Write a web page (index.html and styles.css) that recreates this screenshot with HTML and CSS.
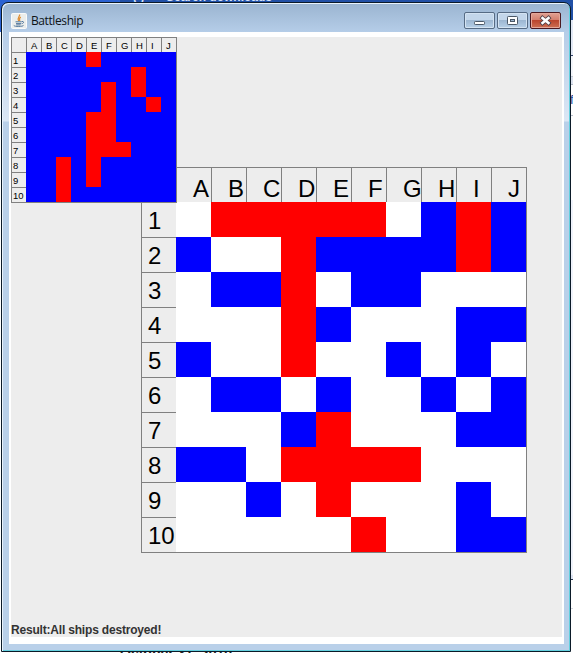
FILE: index.html
```html
<!DOCTYPE html>
<html lang="en">
<head>
<meta charset="utf-8">
<title>Battleship</title>
<link rel="stylesheet" href="styles.css">
</head>
<body>
<div class="desktop">
  <div class="behind-top"><span class="behind-mark">( )</span><span class="behind-label">Search downloads</span></div>
  <div class="behind-right"><span class="behind-letter">f</span></div>
  <div class="behind-bottom">October 31, 2010</div>
  <div class="window">
    <div class="titlebar">
      <svg class="app-icon" width="16" height="16" viewBox="0 0 16 16">
        <rect x=".5" y=".5" width="15" height="15" rx="1" fill="#eceeec" stroke="#fafafa"/>
        <path d="M8.7 1.5C9 3.5 5.8 4.5 7.6 8M9.8 4C7.8 5.2 8.4 6 8.8 8" fill="none" stroke="#e08a2c" stroke-width="1.2"/>
        <path d="M4.5 8.8h6.2M5 10.6h5M10.8 8.5c2.8-.5 2 2-.2 2.2M3 12.2c-1 1.6 9 1.6 9.5.2M5.2 11.9h4.4" fill="none" stroke="#54789c" stroke-width="1"/>
      </svg>
      <span class="title">Battleship</span>
      <div class="controls">
        <div class="control"><svg width="29" height="15" viewBox="0 0 29 15"><rect x="9.5" y="8.5" width="10" height="3" rx=".8" fill="#fff" stroke="#4b5867"/></svg></div>
        <div class="control"><svg width="29" height="15" viewBox="0 0 29 15"><rect x="9.5" y="3.5" width="10" height="8" rx=".8" fill="#fff" stroke="#4b5867"/><rect x="12.5" y="6.5" width="4" height="2" fill="#9db6d0" stroke="#4b5867"/></svg></div>
        <div class="control close"><svg width="29" height="15" viewBox="0 0 29 15"><path d="M11.5 5l6 5M17.5 5l-6 5" stroke="#514047" stroke-width="4.2" stroke-linecap="square"/><path d="M11.5 5l6 5M17.5 5l-6 5" stroke="#fff" stroke-width="2.5" stroke-linecap="square"/></svg></div>
      </div>
    </div>
    <div class="client">
      <div class="panel">
        <div class="board large" data-rows=".rrrrr.brb b..rbbbbrb .bbr.bb... ...rb...bb b..r..b.b. .bb.b..b.b ...br...bb bb.rrrr... ..b.r...b. .....r..bb"></div>
        <div class="board small" data-rows="bbbbrbbbbb bbbbbbbrbb bbbbbrbrbb bbbbbrbbrb bbbbrrbbbb bbbbrrbbbb bbbbrrrbbb bbrbrbbbbb bbrbrbbbbb bbrbbbbbbb"></div>
        <div class="result">Result:All ships destroyed!</div>
      </div>
    </div>
  </div>
</div>
<script src="board.js"></script>
</body>
</html>
```
FILE: board.js
```js
const kinds = { '.': 'open', r: 'ship', b: 'water' };

function addCell(board, className, text) {
  const cell = document.createElement('span');
  cell.className = className;
  cell.textContent = text || '';
  board.appendChild(cell);
}

document.querySelectorAll('.board').forEach((board) => {
  addCell(board, 'head', '');
  [...'ABCDEFGHIJ'].forEach((letter) => addCell(board, 'head', letter));
  board.dataset.rows.split(' ').forEach((row, i) => {
    addCell(board, 'side', String(i + 1));
    [...row].forEach((mark) => addCell(board, kinds[mark]));
  });
});
```
FILE: styles.css
```css
* { box-sizing: border-box; }

body {
  margin: 0;
  font-family: "Liberation Sans", Arial, sans-serif;
}

.desktop {
  position: relative;
  width: 573px;
  height: 653px;
  overflow: hidden;
  background: linear-gradient(#2b62d2 0 32px, #fff 32px);
}

.behind-top {
  position: absolute;
  left: 120px;
  top: 0;
  width: 453px;
  height: 20px;
  overflow: hidden;
  background: #2150a6;
  color: #d5e2fa;
  font-size: 12px;
  font-weight: bold;
}

.behind-mark { position: absolute; left: 13px; top: -10px; }
.behind-label { position: absolute; left: 46px; top: -9px; line-height: 13px; }

.behind-right {
  position: absolute;
  left: 570px;
  top: 20px;
  width: 3px;
  height: 633px;
  overflow: hidden;
  background: linear-gradient(#e3e9f5 0 35px, #34446c 35px 36px, #f3f5fa 36px 56px, #c3c9d4 56px 57px, #dde3ef 57px 64px, #b2bac8 64px 65px, #fff 65px 95px, #b9bfcb 95px 96px, #fff 96px 180px, #f0f3fb 180px 555px, #dce3f2 555px 559px, #27334c 559px 560px, #fff 560px 588px, #d5d8de 588px 589px, #fff 589px);
}

.behind-letter {
  position: absolute;
  left: 0;
  top: 72px;
  color: #2850a0;
  font-size: 13px;
}

.behind-bottom {
  position: absolute;
  left: 120px;
  top: 645px;
  color: #222;
  font-size: 14px;
  line-height: 16px;
  font-weight: bold;
}

.window {
  position: absolute;
  left: 1px;
  top: 2px;
  width: 570px;
  height: 650px;
  padding: 0 6px 6px 7px;
  border: 1px solid #0b1a28;
  border-radius: 7px 7px 0 0;
  background: linear-gradient(#9ab4d0 0, #b5cde8 29px, #c3d5eb 60px, #dbe7f5 118px, #b9d0e9 119px);
  box-shadow: inset 1px 1px #e9f3fc, inset -1px -1px #63d0df;
}

.titlebar {
  display: flex;
  align-items: flex-start;
  height: 29px;
  padding: 9px 3px 0 2px;
}

.app-icon { display: block; margin-top: 1px; }

.title {
  flex: 1;
  margin: 1px 0 0 4px;
  color: #101418;
  font: 12px/16px "Open Sans", "Noto Sans", sans-serif;
  letter-spacing: -0.4px;
}

.controls { display: flex; gap: 2px; }

.control {
  width: 31px;
  height: 17px;
  border: 1px solid #566b84;
  border-radius: 2px;
  background: linear-gradient(#c3d6ea 0 45%, #9bb5d0 46%, #b7d0e8);
  box-shadow: inset 0 0 0 1px #d4e3f2;
}

.control svg { display: block; }

.close {
  border-color: #4a1820;
  background: linear-gradient(#e0a193 0, #d4806f 45%, #b9422b 46%, #cd7054);
  box-shadow: inset 0 0 0 1px #e4a799;
}

.client {
  height: 612px;
  padding: 5px 2px 7px;
  background: #fff;
}

.panel {
  position: relative;
  display: flex;
  flex-direction: column;
  align-items: flex-start;
  height: 600px;
  background: #ededed;
}

.board {
  display: grid;
  grid-template-columns: repeat(11, var(--cell));
  grid-auto-rows: var(--cell);
  border: solid #808080;
  border-width: 0 1px 1px 0;
  background: #ededed;
  color: #000;
}

.large {
  --cell: 35px;
  margin: 130px 0 0 130px;
  font-size: 24px;
  line-height: 24px;
}

.small {
  --cell: 15px;
  position: absolute;
  left: 0;
  top: 0;
  font-size: 9.5px;
  line-height: 10px;
}

.head, .side { border-top: 1px solid #808080; border-left: 1px solid #808080; white-space: nowrap; }
.large .head { padding: 9px 0 0 16px; }
.large .side { padding: 6px 0 0 6px; }
.small .head { padding: 3px 0 0 4px; }
.small .side { padding: 3px 0 0 1px; }

.open { background: #fff; }
.ship { background: #f00; }
.water { background: #00f; }

.result {
  margin: auto 0 -1px;
  color: #333;
  font-size: 12px;
  line-height: 15px;
  font-weight: bold;
  letter-spacing: -0.19px;
}
```
